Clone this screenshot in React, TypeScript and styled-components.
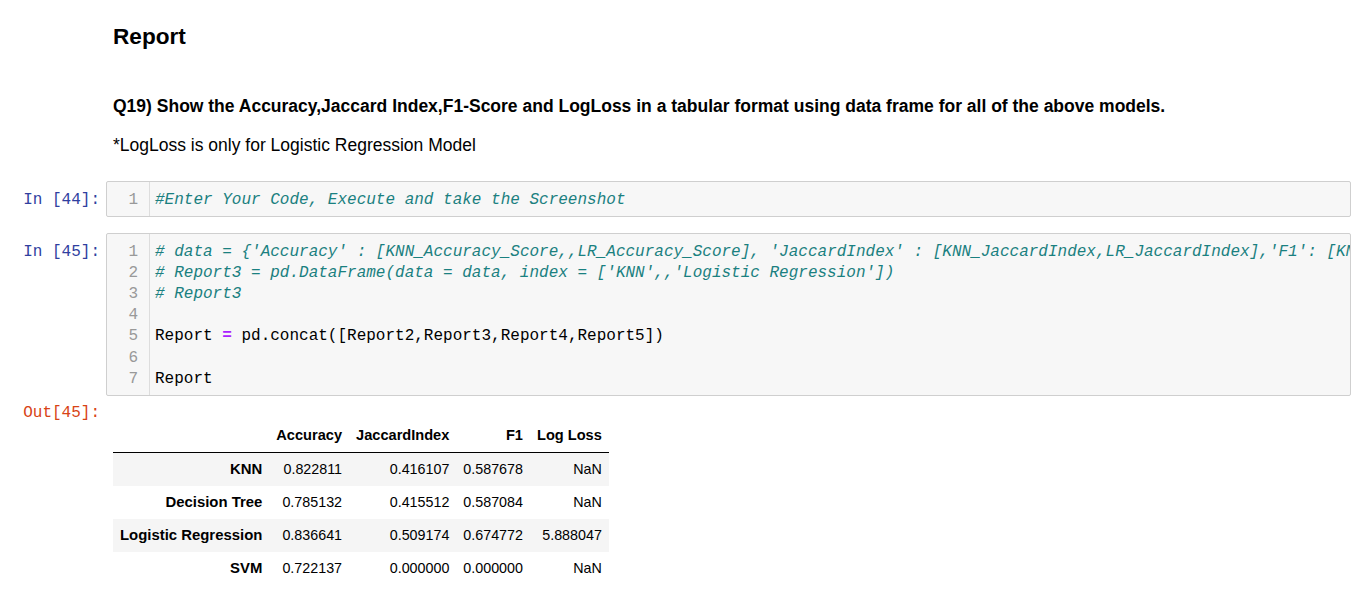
import React from "react";
import styled, { createGlobalStyle } from "styled-components";

const Global = createGlobalStyle`
  html, body { margin: 0; padding: 0; background: #fff; }
  body { font-family: "Liberation Sans", Arial, sans-serif; color: #000; }
`;

const Notebook = styled.div`
  display: flex;
  flex-direction: column;
  padding: 24px 21px 0 0;
  width: 1372px;
  box-sizing: border-box;
`;

const Cell = styled.div<{ $mt?: number }>`
  display: flex;
  flex-direction: row;
  margin-top: ${(p) => p.$mt ?? 0}px;
`;

const Prompt = styled.div<{ $out?: boolean }>`
  flex: 0 0 106px;
  box-sizing: border-box;
  padding: ${(p) => (p.$out ? "0" : "9px")} 6px 0 0;
  text-align: right;
  font-family: "Liberation Mono", monospace;
  font-size: 16px;
  line-height: 21.2px;
  color: ${(p) => (p.$out ? "#D84315" : "#303F9F")};
`;

const Markdown = styled.div`
  flex: 1;
  padding-left: 7px;
`;

const Heading = styled.h3`
  margin: 0;
  font-size: 22.6px;
  line-height: 26px;
  font-weight: bold;
`;

const Para = styled.p<{ $bold?: boolean; $mt: number }>`
  margin: ${(p) => p.$mt}px 0 0 0;
  font-size: 17.5px;
  line-height: 20px;
  font-weight: ${(p) => (p.$bold ? "bold" : "normal")};
`;

const InputBox = styled.div`
  flex: 1;
  display: flex;
  min-width: 0;
  background: #f7f7f7;
  border: 1px solid #cfcfcf;
  border-radius: 2px;
  overflow: hidden;
`;

const Gutter = styled.div`
  flex: 0 0 42px;
  border-right: 1px solid #ddd;
  padding: 8px 0 4.5px;
`;

const LineNo = styled.div`
  font-family: "Liberation Mono", monospace;
  font-size: 16px;
  line-height: 21.2px;
  height: 21.2px;
  color: #999;
  text-align: right;
  padding-right: 11px;
`;

const Code = styled.div`
  flex: 1;
  min-width: 0;
  padding: 8px 0 4.5px 5px;
  overflow: hidden;
`;

const Line = styled.div`
  font-family: "Liberation Mono", monospace;
  font-size: 16px;
  line-height: 21.2px;
  white-space: pre;
  height: 21.2px;
  color: #000;
`;

const Comment = styled.span`
  color: #1a8080;
  font-style: italic;
`;

const Op = styled.span`
  color: #aa22ff;
  font-weight: bold;
`;

const Output = styled.div`
  flex: 1;
  padding-left: 7px;
  padding-top: 16px;
`;

const Table = styled.table`
  border-collapse: collapse;
  border-spacing: 0;
  font-family: "Liberation Sans", Arial, sans-serif;
  font-size: 14.3px;
  color: #000;
`;

const HeadRow = styled.tr`
  border-bottom: 1px solid #000;
`;

const BodyRow = styled.tr<{ $striped: boolean }>`
  background: ${(p) => (p.$striped ? "#f5f5f5" : "transparent")};
`;

const Th = styled.th<{ $index?: boolean }>`
  padding: 7px 7px;
  line-height: 19px;
  text-align: right;
  font-weight: bold;
  font-size: ${(p) => (p.$index ? "14.9px" : "14.6px")};
  white-space: nowrap;
`;

const Td = styled.td`
  padding: 7px 7px;
  line-height: 19px;
  text-align: right;
  white-space: nowrap;
`;

const rows: [string, string, string, string, string][] = [
  ["KNN", "0.822811", "0.416107", "0.587678", "NaN"],
  ["Decision Tree", "0.785132", "0.415512", "0.587084", "NaN"],
  ["Logistic Regression", "0.836641", "0.509174", "0.674772", "5.888047"],
  ["SVM", "0.722137", "0.000000", "0.000000", "NaN"],
];

const CodeCell: React.FC<{ n: number; lines: React.ReactNode[]; mt: number }> = ({ n, lines, mt }) => (
  <Cell $mt={mt}>
    <Prompt>In [{n}]:</Prompt>
    <InputBox>
      <Gutter>
        {lines.map((_, i) => (
          <LineNo key={i}>{i + 1}</LineNo>
        ))}
      </Gutter>
      <Code>
        {lines.map((l, i) => (
          <Line key={i}>{l}</Line>
        ))}
      </Code>
    </InputBox>
  </Cell>
);

export default function App() {
  return (
    <>
      <Global />
      <Notebook>
        <Cell>
          <Prompt />
          <Markdown>
            <Heading>Report</Heading>
            <Para $bold $mt={46}>
              Q19) Show the Accuracy,Jaccard Index,F1-Score and LogLoss in a tabular format using data frame for all of the above models.
            </Para>
            <Para $mt={19}>*LogLoss is only for Logistic Regression Model</Para>
          </Markdown>
        </Cell>
        <CodeCell
          n={44}
          mt={26}
          lines={[<Comment>#Enter Your Code, Execute and take the Screenshot</Comment>]}
        />
        <CodeCell
          n={45}
          mt={16}
          lines={[
            <Comment>
              # data = {"{"}'Accuracy' : [KNN_Accuracy_Score,,LR_Accuracy_Score], 'JaccardIndex' : [KNN_JaccardIndex,LR_JaccardIndex],'F1': [KNN_F1_Score,,LR_F1_Score], 'Log Loss' : [LR_LogLoss]{"}"}
            </Comment>,
            <Comment># Report3 = pd.DataFrame(data = data, index = ['KNN',,'Logistic Regression'])</Comment>,
            <Comment># Report3</Comment>,
            "",
            <>
              Report <Op>=</Op> pd.concat([Report2,Report3,Report4,Report5])
            </>,
            "",
            "Report",
          ]}
        />
        <Cell $mt={7}>
          <Prompt $out>Out[45]:</Prompt>
          <Output>
            <Table>
              <thead>
                <HeadRow>
                  <Th></Th>
                  <Th>Accuracy</Th>
                  <Th>JaccardIndex</Th>
                  <Th>F1</Th>
                  <Th>Log Loss</Th>
                </HeadRow>
              </thead>
              <tbody>
                {rows.map((r, i) => (
                  <BodyRow key={r[0]} $striped={i % 2 === 0}>
                    <Th $index>{r[0]}</Th>
                    <Td>{r[1]}</Td>
                    <Td>{r[2]}</Td>
                    <Td>{r[3]}</Td>
                    <Td>{r[4]}</Td>
                  </BodyRow>
                ))}
              </tbody>
            </Table>
          </Output>
        </Cell>
      </Notebook>
    </>
  );
}
